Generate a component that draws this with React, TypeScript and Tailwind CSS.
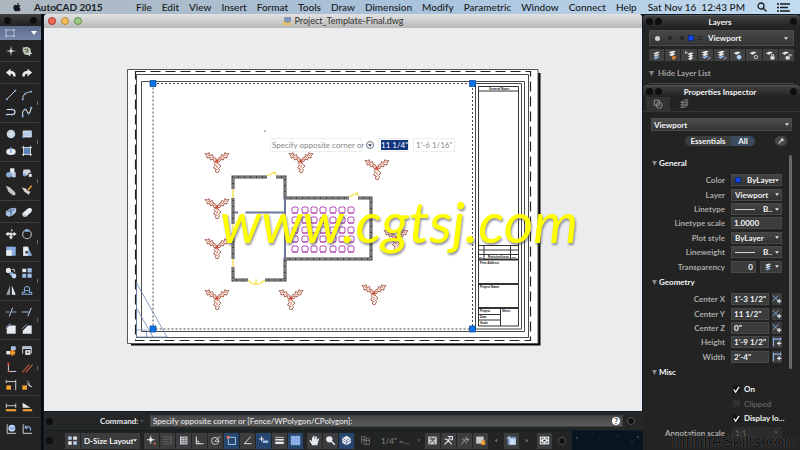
import type { ReactNode } from "react";
import { FaApple } from "react-icons/fa";

const menus = ["File", "Edit", "View", "Insert", "Format", "Tools", "Draw", "Dimension", "Modify", "Parametric", "Window", "Connect", "Help"];

const W = "#e6eaee";
const B = "#86aee0";
const O = "#f0a030";

// all glyphs are drawn on a 14x14 grid
const glyphs: Record<string, ReactNode> = {
  point: <path d="M7 1l.9 5L13 7l-5.100.9L7 13l-.9-5.100L1 7l5.100-1z" fill={W} />,
  recycle: <><path d="M2 3l5-1 4 2 1 5-3 3-5-1-2-4z" fill="#b9c3b0" /><path d="M4 5h4v3H5M8 10l3-2" stroke="#405038" fill="none" /><path d="M10 7v6M7 10h6" stroke={W} /></>,
  undo: <path d="M1 6.500L6.500 2v2.600c4 0 6 1.800 6 6.400H9.600c0-2.500-1-3.200-3.100-3.200V11z" fill={W} />,
  redo: <path d="M13 6.500L7.500 2v2.600c-4 0-6 1.800-6 6.400h2.900c0-2.500 1-3.200 3.100-3.200V11z" fill={W} />,
  line: <><path d="M2 12L12 2" stroke={W} /><path d="M1 11h2v2H1zM11 1h2v2h-2z" fill={B} /></>,
  arc: <><path d="M2 12c0-6 4-8 10-9" stroke={W} fill="none" /><path d="M1 11h2v2H1zM4 4.500h2v2H4zM11 2h2v2h-2z" fill={B} /></>,
  polyline: <><path d="M2 4h6c5 0 5 6 0 6H2" stroke={W} fill="none" strokeWidth="1.200" /><path d="M1 9h2v2H1zM7 3h2v2H7zM7 9h2v2H7z" fill={B} /></>,
  spline: <><path d="M2 12C1 3 6 3 7 6s3 5 5-4" stroke={W} fill="none" strokeWidth="1.200" /><path d="M1 11h2v2H1zM4 3h2v2H4zM8 8h2v2H8zM11 1h2v2h-2z" fill={B} /></>,
  circle: <><circle cx="7" cy="7" r="5" fill="#c9d5e4" /><circle cx="7" cy="7" r="1.500" fill={W} /></>,
  rect: <><path d="M2.500 3.500h9.500v7H2.500z" fill="#b5cbea" stroke={W} /><path d="M1.500 9.500h2v2h-2zM11 3h2v2h-2z" fill={B} /></>,
  ellipse: <><ellipse cx="7" cy="8" rx="5.500" ry="3.800" fill={W} /><path d="M6 3h2v6H6z" fill={B} /></>,
  hatch: <><path d="M3 3h8v8H3z" fill="#5580b5" /><path d="M1 3h12M3 1v12M11 1v12M1 11h12" stroke={W} /></>,
  union: <><path d="M6 1.500h5v6H6z" fill={W} /><circle cx="4.500" cy="9" r="3.200" fill={B} /><path d="M7 6h5.500v6H8z" fill="#c0d2ea" /></>,
  subtract: <><path d="M3 3h7l2 3-3 1-2 3H4L2 7z" fill="#d5d9dd" /><circle cx="4" cy="9" r="2" fill={B} /><path d="M9 8h3.500v3.500H9z" fill={W} /></>,
  brush: <path d="M1 2l5 2 6 6v3H9L4 9z" fill="#c5c5c0" />,
  match: <><path d="M1 4l4 1 3 3 3 1-2 3.500-5-3.500z" fill="#d5d5cc" /><path d="M8 7l4.500-5" stroke={O} strokeWidth="1.800" /></>,
  group: <><path d="M1 6l5-3 7-1v5l-4 4-5 1.500-3-2z" fill="#a9c2e2" /><path d="M2 6h5v6M7 6l5-3M6 3l2 6" stroke="#44658f" fill="none" /></>,
  eraser: <><path d="M1 9l7-6 3-1 2 2-1 3-6 5.500H3z" fill={W} /><path d="M2 9l4 3" stroke="#8d969f" /></>,
  move: <path d="M7 .5l2.500 3H8v2H4V4.500L.5 7 4 9.500V8h2v2H4.500L7 13.500 9.500 10H8V8h2v1.500L13.500 7 10 4.500V6H8z" fill={W} />,
  rotate: <><circle cx="7" cy="7.500" r="5" stroke="#b5bcc5" strokeWidth="1.300" fill="none" /><path d="M5 1.500h4v3H5z" fill={B} /></>,
  scale: <><path d="M1.500 2h11v10.500h-11z" fill={B} /><path d="M1.500 6H8v6.500H1.500z" fill={W} /></>,
  stretch: <><path d="M3 2h5l5 10.500H3z" fill={B} /><path d="M2.500 2h6v10.500h-6z" fill={W} /><path d="M5 7h3l1 3H5z" fill="#445" /></>,
  copy: <><circle cx="4" cy="4" r="3" fill={W} /><circle cx="7.500" cy="8" r="2.200" fill={B} /><circle cx="10.500" cy="10.500" r="2.800" fill="#c5d7ed" /><path d="M8 3h3v3" stroke={W} fill="none" /></>,
  array: <><path d="M1.500 2H6v4H1.500z" fill={W} /><path d="M7.500 1.500h5v5h-5zM1.500 8H6v4.500H1.500zM7.500 8h5v4.500h-5z" fill="#9dbde6" /></>,
  mirror: <><path d="M6 1.500v11H1.500z" fill="#9aa2aa" /><path d="M8 1.500v11h4.500z" fill={W} /></>,
  offset: <path d="M1.500 12h11V9.500h-3C11 6 10 3 7 3S3 6 4.500 9.500h-3zM5 7.500h4" fill="none" stroke={B} strokeWidth="1.200" />,
  trim: <><path d="M1 7h4M8 7h5" stroke={B} strokeWidth="1.300" /><path d="M5 12l4-10" stroke={W} /></>,
  extend: <><path d="M1 7h8" stroke={B} strokeWidth="1.300" /><path d="M8 12l4-10" stroke={W} /></>,
  fillet: <><path d="M2 12.500V8c0-3 2-5 5-5h5.500v9.500z" fill={W} /><path d="M1 7c1-3 2-5 6-5.500" stroke={B} fill="none" /></>,
  chamfer: <><path d="M2 12.500V9l6-6h4.500v9.500z" fill={W} /><path d="M1 7l6-5.500" stroke={B} /></>,
  insert: <><path d="M7 1.500h5.500V6H7z" fill="#a9c5ec" /><path d="M1.500 7H6v4H1.500z" fill={W} /><path d="M6 6h5.500v5.500H6z" fill="#d97a20" /><path d="M8.700 5.500v7M5.500 9H12" stroke={O} strokeWidth="1.500" /></>,
  attach: <><path d="M2 2h10v2H2zM2 4v6M12 4v6" stroke={W} fill={B} /><path d="M5 6h6v5.500H5z" fill={W} /><circle cx="8" cy="8.500" r="1.200" fill="#555" /></>,
  ucs: <><path d="M4 1.500V11h9" stroke={W} fill="none" /><path d="M3 1h2v3H3zM3 10h2v2H3z" fill="#e05030" /></>,
  parallel: <path d="M1.500 12l8-9M5.500 12l8-9" stroke="#c65a3d" strokeWidth="1.300" />,
  lockdim: <><path d="M1.500 1v4M12.500 1v12M2 3h10" stroke={W} /><path d="M1.500 7.500H7v5H1.500z" fill={O} /></>,
  lockangle: <><path d="M7 2l2 2 1 4 3 1M7 5l4 4" stroke={W} fill="none" /><path d="M1.500 7.500H7v5H1.500z" fill={O} /></>,
  dim: <><path d="M1.500 3v5M12.500 3v5M2 5.500h10" stroke={W} /><path d="M1 9.500h12v2.500H1z" fill={O} /></>,
  slope: <><path d="M2 2l9 6H2z" fill={W} /><path d="M2 9.500h11v2.500H2z" fill={O} /></>,
  world: <><path d="M2.500 1.500V12H13" stroke={W} fill="none" /><circle cx="8" cy="6" r="4" fill="#b7d2f4" /><path d="M6 5l2 2 3-2" stroke="#487bb9" fill="none" /></>,
  prev: <><path d="M2.500 1.500V12H13" stroke={W} fill="none" /><path d="M5 6c2-3 7-2 6 3M5 3v3h3" stroke={B} fill="none" strokeWidth="1.200" /></>,
  layers: <><path d="M3 4l6-2 2 1-5 3z" fill={W} /><path d="M3 7l6-2 2 1-5 3z" fill="#c8d5e5" /><path d="M3 10l6-2 2 1-5 3z" fill={B} /></>,
  layersOrange: <><path d="M2 3l6-2 3 1-5 3zM2 6l6-2 3 1-5 3z" fill={W} /><path d="M6 8h6l-2 4H7z" fill="#df8130" /></>,
  layersWalk: <><path d="M2 2l4 3M2 2v3" stroke={W} /><path d="M5 5l4-2 3 1-4 3zM5 8l4-2 3 1-4 3zM5 11l4-2 3 1-4 3z" fill={W} /></>,
  layersMerge: <><path d="M2 3l6-2 3 1-5 3zM2 6l6-2 3 1-5 3z" fill={W} /><path d="M2 9l7-2 2 1-5 3z" fill={B} /><path d="M10 12l3-3" stroke={W} /></>,
  freeze: <><path d="M2 4l5-2 4 1-5 3z" fill={W} /><circle cx="9" cy="9" r="3" fill="#83b7f1" /><path d="M9 6v6M6 9h6" stroke={W} /></>,
  layerOff: <><path d="M2 4l5-2 4 1-5 3z" fill={W} /><circle cx="10" cy="9" r="2.200" fill="none" stroke={W} /></>,
  layerLock: <><path d="M1 4l5-2 4 1-5 3z" fill={W} /><path d="M7 8h5v4H7z" fill={W} /><path d="M8 8V6h3v2" stroke={W} fill="none" /></>,
  layerUnlock: <><path d="M1 4l5-2 4 1-5 3z" fill={W} /><path d="M6 8h5v4H6z" fill={W} /><path d="M10 8V6h3v2" stroke={W} fill="none" /></>,
  infer: <><path d="M6 1v10M1 6h10" stroke={W} strokeWidth="1.200" /><path d="M4 4h4v4H4z" fill={W} /><path d="M9 11h4M11 9v4" stroke="#dd6650" /></>,
  snap: <path d="M2 2.500h10M2 5.500h10M2 8.500h10M2 11.500h10M12 2v10" stroke="#a9aeb3" strokeDasharray="1 1.500" />,
  grid: <><path d="M2.500 2h9.500v10H2.500z" fill="#d5d8dc" /><path d="M3 4.500h9M3 7h9M3 9.500h9M5.500 2v10M8 2v10M10 2v10" stroke="#5c6064" strokeWidth=".7" /></>,
  ortho: <><path d="M3 2v9h9" stroke={W} fill="none" strokeWidth="1.300" /><path d="M3 8h3v3" stroke={W} fill="none" /></>,
  polar: <><circle cx="6.500" cy="7.500" r="4.500" stroke={W} fill="none" /><path d="M6 8l7-6M6 8h6" stroke={W} /></>,
  osnap: <><path d="M3 3h9v9H3z" stroke="#a9c8ee" fill="none" strokeWidth="1.200" /><path d="M1 1h3.500v3.500H1z" fill="#dd7755" /></>,
  otrack: <path d="M11 2l-8 9h9" stroke={W} fill="none" strokeWidth="1.200" />,
  dyn: <><path d="M4.500 2v6M1.500 5h6" stroke={W} strokeWidth="1.300" /><path d="M6 7h7v3H6z" fill="#a9c8ee" /></>,
  lwt: <><path d="M1.500 3h11" stroke={W} /><path d="M1.500 6h11" stroke={W} strokeWidth="2" /><path d="M1.500 10h11" stroke={W} strokeWidth="3" /></>,
  qp: <path d="M1.500 1.500h11v11h-11z" fill="#86aee8" stroke={W} strokeDasharray="1 1" />,
  hand: <path d="M4 13L.5 7l1.200-.8L3.800 8V3h1.400v3l.3-5H7v5L8.500 1.500H10V6.500l1.800-2.500 1.200.5L10.500 13z" fill={W} />,
  zoom: <><circle cx="5.500" cy="5.500" r="4" fill={W} /><path d="M8 8l4.500 4.500" stroke={W} strokeWidth="1.800" /></>,
  cube: <><path d="M7 1l5.500 3v6L7 13l-5.500-3V4z" fill={W} /><path d="M2 4l5 3 5-3M7 7v6M2 7l5 3 5-3" stroke="#5f7da5" fill="none" /></>,
  model: <><path d="M2 2h5M2 6h5M2 2v9M5 4h7v8H5zM5 7h7M8 4v8" stroke="#777" fill="none" /></>,
  anno: <><path d="M1.500 2h11v10h-11z" fill="#c7c9cc" /><path d="M3 11l8-8M5 3l5 8M3 5h7" stroke="#333" /></>,
  person: <path d="M2 12l5-5-3-2H2M7 7l4 5M7 7l2-4M6 2h6v4H9" stroke={W} fill="none" strokeWidth="1.400" />,
  personPlus: <path d="M3 12l4-5-3-2M7 7l3 4M7 7l3-5M9 6h4M11 4v4" stroke="#b5b5b5" fill="none" />,
  lockui: <><path d="M1.500 2H11v9H1.500z" fill="#c9cacc" /><path d="M8 8h5v4.500H8z" fill={O} /><path d="M9 8V6.500h3V8" stroke={O} fill="none" /></>,
  viewports: <><path d="M2 2h10v10H2z" fill="#4778b5" /><path d="M5 5h7.500v7.500H5z" fill="#c7def5" /><path d="M1 4h12M4 1v12" stroke={W} /></>,
  full: <><path d="M1 2h12v10H1z" fill={W} /><path d="M3 6V4h3M8 4h3v2M11 8v2H8M6 10H3V8" stroke="#333" fill="none" /><path d="M5.500 6h3v2h-3z" fill="#333" /></>,
  model4: <><path d="M1.500 2H6v4H1.500zM8 8h4.500v4.500H8z" fill="#b4cced" /><path d="M8 2h4.500v4H8zM1.500 8H6v4.500H1.500z" fill={W} /></>,
  pick: <><path d="M1 2l8 8M9 2l-8 8" stroke="#84aee2" strokeWidth="1.300" /><path d="M7 10h6M10 7v6" stroke={W} strokeWidth="1.600" /></>,
  measure: <><path d="M2 1v12M2 3h10M12 1v4" stroke="#84aee2" strokeWidth="1.600" /><path d="M7 9h6M10 6v6" stroke={W} strokeWidth="1.600" /></>,
};

function Glyph({ name, className = "size-3.5" }: { name: string; className?: string }) {
  return (
    <svg viewBox="0 0 14 14" className={`shrink-0 ${className}`} aria-hidden="true">
      {glyphs[name]}
    </svg>
  );
}

function Arrow({ className = "text-gray-200" }: { className?: string }) {
  return (
    <svg viewBox="0 0 6 4" className={`pointer-events-none h-[3px] w-1 shrink-0 ${className}`} aria-hidden="true">
      <path d="M0 0h6L3 4z" fill="currentColor" />
    </svg>
  );
}

function Disclosure() {
  return (
    <svg viewBox="0 0 5 5" className="size-[5px] shrink-0" aria-hidden="true">
      <path d="M0 0h5L2.500 5z" fill="#888" />
    </svg>
  );
}

function Knob() {
  return <span className="size-[7px] shrink-0 rounded-full bg-[#0e0e0e]" />;
}

const toolGroups = [
  ["point", "recycle"],
  ["undo", "redo"],
  ["line", "arc", "polyline", "spline"],
  ["circle", "rect", "ellipse", "hatch"],
  ["union", "subtract", "brush", "match"],
  ["group", "eraser"],
  ["move", "rotate", "scale", "stretch"],
  ["copy", "array", "mirror", "offset"],
  ["trim", "extend", "fillet", "chamfer"],
  ["insert", "attach", "ucs", "parallel", "lockdim", "lockangle"],
  ["dim", "slope"],
  ["world", "prev"],
];

function ToolPalette() {
  return (
    <aside className="w-[43px] shrink-0 border-r-2 border-[#0b0c0c] bg-[#222322]">
      <div className="flex h-3 items-center justify-between bg-gradient-to-b from-[#414141] to-[#202020] px-1">
        <Knob />
        <Knob />
      </div>
      <button aria-label="Selection tools" className="flex h-3.5 w-full items-center justify-between bg-gradient-to-b from-[#5b6b8c] to-[#7585a8] px-1">
        <svg viewBox="0 0 10 8" className="h-2 w-3">
          <path d="M1 1h8v6H1z" fill="none" stroke="#aeb9cd" />
          <path d="M0 0h2v2H0zM8 0h2v2H8zM0 6h2v2H0zM8 6h2v2H8z" fill="#aeb9cd" />
        </svg>
        <svg viewBox="0 0 6 4" className="h-1 w-1.5">
          <path d="M0 0h6L3 4z" fill="#fff" />
        </svg>
      </button>
      {toolGroups.map((group) => (
        <div key={group[0]} className="mr-0.5 flex items-center border-b border-[#3d3e3d] py-0.5 pl-[3px] last:border-0">
          <div className="grid grid-cols-2">
            {group.map((name) => (
              <button key={name} aria-label={name} className="flex h-[17px] w-4 items-center justify-center">
                <Glyph name={name} className="size-3" />
              </button>
            ))}
          </div>
          {group.length > 2 ? <span className="ml-0.5 h-1 w-px bg-[#686868]" /> : null}
        </div>
      ))}
    </aside>
  );
}

const trees = [[217, 161], [301, 161], [377, 168], [217, 207], [217, 247], [396, 238], [217, 298], [291, 298], [374, 293]];
const chairRows = [210, 220, 230, 239, 249];
const chairCols = [295, 305, 314, 323, 333, 342, 351];
const leaf = "M0 0L-1.500-3-4-4-4.500-6.500-7-5.500-8-8.500-9-7-12-7.500-10-5-10-3-7-3.500-6.500-1-4-2-3 .5z";

function Tree({ x, y }: { x: number; y: number }) {
  return (
    <g transform={`translate(${x} ${y})`} fill="none" stroke="#93432f" strokeWidth=".8" strokeLinejoin="round">
      <path d={leaf} />
      <path d={leaf} transform="scale(-1 1)" />
      <path d="M0 0l-3 2.500 1.500 1.500-2 3 2.500 1-.5 3 2.500.8 1.500-3.300-1-1 2.500-2.500-2-1.500z" />
      <path d="M-9-6L0 0l9-6M0 0v9M-2 1h4" stroke="#e0401f" strokeDasharray="3 1" />
    </g>
  );
}

function Drawing() {
  const walls = "M233 189V177H267M276 177H285V198H349M358 198H371V259H285V280H265M248 280H233V267M233 259V233M233 224V198";
  return (
    <svg viewBox="44 28 598 382" preserveAspectRatio="xMinYMin meet" className="h-full w-full" role="img" aria-label="Floor plan layout">
      <path d="M131 73h409.500v272.500H131z" fill="#050505" />
      <path d="M127.500 69.500h410.500v274H127.500z" fill="#fff" stroke="#555" />
      <g fill="none" stroke="#4a4a4a">
        <path d="M135.500 71.500H530.500V340.500H135.500z" stroke="#222" strokeWidth="1.200" strokeDasharray="10 5" />
        <path d="M136.500 74.500H528.500V337.500H136.500z" />
        <path d="M141.500 81.500H524.500V331.500H141.500z" />
        <path d="M153 83.500H472.500V329H153z" stroke="#444" strokeDasharray="2 2" />
        <path d="M475.500 83.500H521.500V329H475.500z" />
        <path d="M478.500 86.500H518.500V326H478.500zM478.500 91H518.500M478.500 245.500H518.500M478.500 250H518.500M478.500 254.500H518.500M484 245.500V259M510.500 245.500V259M500.500 308.500V326M478.500 314.500H500.500M478.500 320H500.500" stroke="#333" />
        <path d="M478.500 259.500H518.500M478.500 284H518.500M478.500 308H518.500" stroke="#333" strokeWidth="2" />
      </g>
      <g fill="#111" fontFamily="Liberation Sans, sans-serif" fontSize="3" fontWeight="bold">
        <text x="489" y="90">General Notes</text>
        <text x="479" y="258" fontSize="2">No.</text>
        <text x="488" y="258">Revision/Issue</text>
        <text x="511.500" y="258" fontSize="2">Date</text>
        <text x="480" y="264">Firm Address</text>
        <text x="480" y="288">Project Name</text>
        <text x="480" y="312">Project</text>
        <text x="480" y="318">Date</text>
        <text x="480" y="323.500">Scale</text>
        <text x="502" y="312">Sheet</text>
      </g>
      <g fill="none">
        <path d={walls} stroke="#444" strokeWidth="3" />
        <path d={walls} stroke="#a8a8a8" strokeDasharray="5 1" />
        <path d="M285 198V259M245.500 212.500H285M234 212.500H238" stroke="#6c76a0" strokeWidth="2" />
        <path d="M267 176l8-4 1 3M349 197l8-4 1 3M233 189v9M233 224v9M233 259v8M248 280l3 3 5 1.500 5-1.500 4-3M256 279v5" stroke="#f1df45" strokeWidth="1.300" />
        <g stroke="#b548b4">
          {chairRows.map((y) =>
            chairCols.map((x) => <path key={`${x}-${y}`} d={`M${x - 2} ${y - 3}h4l1 1v4l-1 1h-4l-1-1v-4zM${x - 3} ${y + 3}h6`} />),
          )}
        </g>
        <path d="M136.500 283V337H167zM136.500 308L153 337M136.500 330h10v7" stroke="#6c87b1" strokeWidth=".8" />
      </g>
      {trees.map(([x, y]) => (
        <Tree key={`${x}-${y}`} x={x} y={y} />
      ))}
      <path d="M264 131h2" stroke="#777" />
      <g fill="#0a74e8" stroke="#124a96" strokeWidth=".8">
        <path d="M150 80.500h6v6h-6zM469.500 80.500h6v6h-6zM150 326h6v6h-6zM469.500 326h6v6h-6z" />
      </g>
    </svg>
  );
}

function DocumentWindow() {
  return (
    <main className="flex min-h-0 flex-1 flex-col overflow-hidden rounded-t-[4px] bg-[#ebecee]">
      <div className="flex h-3.5 shrink-0 items-center bg-gradient-to-b from-[#e2e2e2] to-[#b8b8b8] px-1">
        <div className="flex w-[52px] gap-[5px]">
          <button aria-label="Close" className="size-2 rounded-full border border-[#a33b2c] bg-[#ee6b58]" />
          <button aria-label="Minimize" className="size-2 rounded-full border border-[#b98432] bg-[#f5bf5e]" />
          <button aria-label="Zoom" className="size-2 rounded-full border border-[#5d8a48] bg-[#a1cb83]" />
        </div>
        <h1 className="mr-[52px] flex flex-1 items-center justify-center gap-0.5 text-[9px] leading-3 text-[#333]">
          <svg viewBox="0 0 10 10" className="size-2.5">
            <path d="M2 1h7v6H2z" fill="#8396b8" />
            <path d="M1 5l4 2 4-1v3H1z" fill="#eac057" />
          </svg>
          Project_Template-Final.dwg
        </h1>
      </div>
      <div className="relative min-h-0 flex-1">
        <Drawing />
        <div className="absolute top-[110px] left-[226px] flex items-center gap-1 text-[8px] leading-3">
          <span className="w-[92px] border border-[#eeeeee] bg-white px-px whitespace-nowrap text-[#858585]">Specify opposite corner or</span>
          <button aria-label="Options" className="flex size-2 items-center justify-center rounded-sm border border-gray-500 bg-white">
            <Arrow className="text-gray-700" />
          </button>
          <div className="w-[31px] border border-[#eeeeee] bg-white px-0.5 py-px">
            <input aria-label="Width" defaultValue={'11 1/4"'} className="block h-2.5 w-[27px] bg-[#14367f] text-[8px] text-white outline-none" />
          </div>
          <input aria-label="Height" defaultValue={"1'-6 1/16\""} className="h-3.5 w-[42px] border border-[#eeeeee] bg-white px-0.5 text-[#8c8c8c] outline-none" />
        </div>
        <p className="pointer-events-none absolute top-[163px] left-[176px] text-[57px] leading-[60px] whitespace-nowrap text-[#ffff00] italic drop-shadow-[1px_2px_1px_rgba(70,70,90,0.6)]">
          www.cgtsj.com
        </p>
      </div>
    </main>
  );
}

function CommandLine() {
  return (
    <div className="flex h-5 shrink-0 items-center border-y border-[#101c27] bg-[#252626] pr-2 pl-0.5 text-[8px] text-gray-200">
      <Knob />
      <label htmlFor="command" className="ml-[47px] w-10 font-bold">
        Command:
      </label>
      <Arrow className="text-gray-600" />
      <div className="ml-1.5 flex h-3 flex-1 items-center border border-[#404040] bg-gradient-to-b from-[#464646] to-[#5a5a5a] px-0.5">
        <input id="command" defaultValue="Specify opposite corner or [Fence/WPolygon/CPolygon]:" className="min-w-0 flex-1 bg-transparent font-medium outline-none" />
        <button aria-label="Help" className="flex size-2 items-center justify-center rounded-full bg-white text-[8px] leading-none font-bold text-[#333]">
          ?
        </button>
      </div>
      <span className="ml-1 size-2 rounded-full border border-[#555] bg-[#111]" />
    </div>
  );
}

function StatusButton({ name, on }: { name: string; on?: boolean }) {
  return (
    <button aria-label={name} aria-pressed={on} className={`flex h-4 w-[15px] items-center justify-center ${on ? "bg-[#26456f]" : "bg-[#3c3d3e]"}`}>
      <Glyph name={name} className="size-[11px]" />
    </button>
  );
}

function StatusBar() {
  return (
    <div className="flex h-[19px] shrink-0 bg-[#071521]">
      <div className="flex w-[528px] items-center bg-[#232424] pl-0.5 text-[8px] text-gray-100">
        <Knob />
        <div className="ml-3 flex gap-px">
          <StatusButton name="model4" />
          <div className="flex w-[59px] items-center bg-[#3b3c3d] pr-[3px] pl-[3px]">
            <select aria-label="Layout" className="min-w-0 flex-1 appearance-none bg-transparent font-bold outline-none">
              <option>D-Size Layout</option>
            </select>
            <Arrow />
          </div>
        </div>
        <div className="ml-1 flex gap-px">
          {["infer", "snap", "grid", "ortho", "polar", "osnap", "otrack", "dyn", "lwt", "qp"].map((n) => (
            <StatusButton key={n} name={n} on={["osnap", "dyn", "qp"].includes(n)} />
          ))}
        </div>
        <div className="ml-1 flex gap-px">
          <StatusButton name="hand" />
          <StatusButton name="zoom" />
          <StatusButton name="cube" on />
        </div>
        <button aria-label="Model" className="ml-1 flex h-4 w-[15px] items-center justify-center">
          <Glyph name="model" className="size-[11px]" />
        </button>
        <select aria-label="Viewport scale" className="ml-2 w-9 appearance-none bg-transparent text-[#888] outline-none">
          <option>{'1/4" =...'}</option>
        </select>
        <Arrow className="text-gray-600" />
        <div className="ml-1 flex items-center gap-px">
          <StatusButton name="anno" />
          <StatusButton name="person" />
          <StatusButton name="personPlus" />
          <StatusButton name="lockui" />
        </div>
        <div className="ml-1.5 flex items-center gap-1.5">
          <span className="rotate-90"><Arrow className="text-gray-500" /></span>
          <StatusButton name="viewports" />
          <span className="-rotate-90"><Arrow className="text-gray-500" /></span>
        </div>
        <div className="ml-2 flex items-center gap-1.5">
          <StatusButton name="full" />
          <span className="size-2 rounded-full border border-[#555] bg-[#111]" />
        </div>
      </div>
      <svg className="h-full min-w-0 flex-1" aria-hidden="true">
        <g fill="#30526c">
          <circle cx="5" cy="7" r="1" /><circle cx="20" cy="3" r=".6" /><circle cx="28" cy="9" r=".8" /><circle cx="45" cy="5" r=".6" /><circle cx="60" cy="11" r=".8" /><circle cx="66" cy="6" r="1" />
        </g>
      </svg>
    </div>
  );
}

function PanelHeader({ title }: { title: string }) {
  return (
    <div className="flex h-3 shrink-0 items-center gap-0.5 rounded-t-[4px] border-t border-[#555] bg-gradient-to-b from-[#414141] to-[#222] px-[3px]">
      <Knob />
      <Knob />
      <h2 className="flex-1 pr-3 text-center text-[8px] leading-3 font-bold text-gray-100">{title}</h2>
      <Knob />
    </div>
  );
}

function LayersPanel() {
  return (
    <section className="h-[70px] shrink-0 overflow-hidden bg-[#232424]">
      <PanelHeader title="Layers" />
      <div className="px-1.5 pt-[3px]">
        <div className="flex h-4 items-center gap-1 border border-[#4a4a4a] bg-gradient-to-b from-[#484848] to-[#353535] px-[5px]">
          <span className="size-[5px] rounded-full bg-[#cfcfcf]" />
          <span className="ml-1 size-1 bg-[#292929]" />
          <span className="ml-1 size-1 bg-[#292929]" />
          <span className="size-1.5 border border-[#102a72] bg-[#1447f4]" />
          <span className="size-1 border border-[#292929]" />
          <select aria-label="Current layer" className="ml-0.5 min-w-0 flex-1 appearance-none bg-transparent text-[8px] font-bold text-gray-100 outline-none">
            <option>Viewport</option>
          </select>
          <Arrow />
        </div>
        <div className="mt-[3px] flex h-3 gap-px bg-[#242424]">
          {["layers", "layersOrange", "layersWalk", "layersMerge", "layersMerge", "freeze", "layerOff", "layerLock", "layerUnlock"].map((n, i) => (
            <button key={i} aria-label={n} className="flex flex-1 items-center justify-center bg-[#414141]">
              <Glyph name={n} className="size-[11px]" />
            </button>
          ))}
        </div>
        <button className="mt-1.5 flex items-center gap-1 text-[8px] leading-3 font-bold text-[#a0a0a0]">
          <Disclosure />
          Hide Layer List
        </button>
        <div className="mt-1 border-t border-[#484848]" />
      </div>
    </section>
  );
}

function PropertySelect({ id, value, mark }: { id: string; value: string; mark?: "color" | "line" }) {
  return (
    <div className="flex h-3 w-[51px] items-center border border-[#484848] bg-gradient-to-b from-[#454545] to-[#323232] pr-0.5 pl-[3px]">
      {mark === "color" ? <span className="mr-1.5 size-1.5 border border-[#102a72] bg-[#1447f4]" /> : null}
      {mark === "line" ? <span className="mr-2 h-px w-5 bg-gray-300" /> : null}
      <select id={id} className="min-w-0 flex-1 appearance-none bg-transparent text-[8px] leading-[10px] font-bold text-gray-100 outline-none">
        <option>{value}</option>
      </select>
      <Arrow />
    </div>
  );
}

function Row({ id, label, children }: { id: string; label: string; children: ReactNode }) {
  return (
    <div className="flex items-center gap-1.5">
      <label htmlFor={id} className="w-[82px] text-right font-bold whitespace-nowrap text-[#a9a9a9]">
        {label}
      </label>
      {children}
    </div>
  );
}

function SectionTitle({ children }: { children: ReactNode }) {
  return (
    <h3 className="flex h-4 items-center gap-0.5 pl-[9px] text-[8px] font-bold text-gray-100">
      <Disclosure />
      {children}
    </h3>
  );
}

const general: { label: string; value: string; mark?: "color" | "line"; text?: boolean }[] = [
  { label: "Color", value: "ByLayer", mark: "color" },
  { label: "Layer", value: "Viewport" },
  { label: "Linetype", value: "B..", mark: "line" },
  { label: "Linetype scale", value: "1.0000", text: true },
  { label: "Plot style", value: "ByLayer" },
  { label: "Lineweight", value: "B..", mark: "line" },
];

const geometry = [
  ["Center X", "1'-3 1/2\"", "pick"],
  ["Center Y", '11 1/2"', "pick"],
  ["Center Z", '0"', "pick"],
  ["Height", "1'-9 1/2\"", "measure"],
  ["Width", "2'-4\"", "measure"],
];

const inputClass = "h-3 border border-[#484848] bg-[#3c3c3c] px-0.5 text-[8px] font-bold text-gray-100 outline-none";

function PropertiesPanel() {
  return (
    <section className="relative flex min-h-0 flex-1 flex-col overflow-hidden bg-[#222322] text-[8px]">
      <PanelHeader title="Properties Inspector" />
      <div className="flex h-[15px] shrink-0 border-b border-[#353535] pl-[3px]">
        <button aria-label="Object properties" className="flex w-6 items-center justify-center bg-[#333]">
          <svg viewBox="0 0 12 12" className="size-2.5" fill="none" stroke="#a5a5a5">
            <path d="M1.500 1.500h6v6h-6z" />
            <circle cx="7.500" cy="7.500" r="3.500" />
          </svg>
        </button>
        <button aria-label="Layer properties" className="ml-1 flex w-5 items-center justify-center">
          <svg viewBox="0 0 12 12" className="size-2.5" fill="none" stroke="#909090">
            <path d="M2 4l5-3h4L7 4zM2 7l5-3h4L7 7zM2 10l5-3h4l-4 3z" />
          </svg>
        </button>
      </div>
      <div className="mx-2 mt-1.5 flex h-[13px] shrink-0 items-center border border-[#4a4a4a] bg-gradient-to-b from-[#4c4c4c] to-[#363636] px-0.5">
        <select aria-label="Object type" className="min-w-0 flex-1 appearance-none bg-transparent font-bold text-gray-100 outline-none">
          <option>Viewport</option>
        </select>
        <Arrow />
      </div>
      <div className="mt-[5px] flex shrink-0 items-center pl-[42px]">
        <div className="flex h-2.5 overflow-hidden rounded-full font-bold text-gray-100">
          <button className="flex w-[46px] items-center justify-center bg-[#3c3d3e]">Essentials</button>
          <button className="flex w-6 items-center justify-center bg-[#3b4b60]">All</button>
        </div>
        <button aria-label="Quick select" className="ml-5 flex h-2.5 w-3 items-center justify-center rounded-full bg-[#454545]">
          <svg viewBox="0 0 10 10" className="size-2">
            <path d="M2 8l4-4M5 2l3 3M6 4l2-2" stroke="#ddd" strokeWidth="1.500" />
          </svg>
        </button>
      </div>
      <div className="mt-[9px] flex min-h-0 flex-1">
        <div className="min-w-0 flex-1">
          <SectionTitle>General</SectionTitle>
          <div className="mt-0.5 grid h-[101px] auto-rows-fr">
            {general.map((p) => (
              <Row key={p.label} id={p.label} label={p.label}>
                {p.text ? <input id={p.label} defaultValue={p.value} className={`w-[51px] ${inputClass}`} /> : <PropertySelect id={p.label} value={p.value} mark={p.mark} />}
              </Row>
            ))}
            <Row id="transparency" label="Transparency">
              <div className="flex gap-1">
                <input id="transparency" defaultValue="0" className={`w-[25px] text-right ${inputClass}`} />
                <button aria-label="Transparency source" className="flex h-3 w-[22px] items-center justify-between border border-[#484848] bg-[#3c3c3c] px-0.5">
                  <Glyph name="layers" className="size-2.5" />
                  <Arrow />
                </button>
              </div>
            </Row>
          </div>
          <SectionTitle>Geometry</SectionTitle>
          <div className="mt-0.5 grid h-[72px] auto-rows-fr">
            {geometry.map(([label, value, icon]) => (
              <Row key={label} id={label} label={label}>
                <div className="flex gap-[3px]">
                  <input id={label} defaultValue={value} className={`w-[38px] ${inputClass}`} />
                  <button aria-label={`Pick ${label}`} className="flex h-3 w-2.5 items-center justify-center bg-[#3c3c3c]">
                    <Glyph name={icon} className="size-2.5" />
                  </button>
                </div>
              </Row>
            ))}
          </div>
          <SectionTitle>Misc</SectionTitle>
          <div className="mt-0.5 grid h-[58px] auto-rows-fr">
            {["On", "Clipped", "Display lo..."].map((label) => (
              <label key={label} className={`flex items-center gap-1 pl-[90px] font-bold whitespace-nowrap ${label === "Clipped" ? "text-[#606060]" : "text-gray-100"}`}>
                <input type="checkbox" defaultChecked={label !== "Clipped"} disabled={label === "Clipped"} className="peer sr-only" />
                <svg viewBox="0 0 8 8" className="size-[7px] bg-[#111] text-transparent peer-checked:text-white peer-disabled:bg-[#303030]">
                  <path d="M1 4l2 3 4-6" fill="none" stroke="currentColor" strokeWidth="1.500" />
                </svg>
                {label}
              </label>
            ))}
            <Row id="annotation" label="Annotation scale">
              <div className="flex w-[51px] items-center bg-[#2b2d2a] px-1">
                <select id="annotation" className="min-w-0 flex-1 appearance-none bg-transparent text-[#6a6a6a] outline-none">
                  <option>1:1</option>
                </select>
                <Arrow className="text-gray-600" />
              </div>
            </Row>
          </div>
        </div>
        <div className="mr-2 h-[214px] w-[3px] rounded-full bg-[#686868]" />
      </div>
      <p className="pointer-events-none absolute right-0.5 -bottom-0.5 font-['Liberation_Sans'] text-[17px] leading-5 text-[#0c0d0c] [text-shadow:0_0_1px_#888]">InfiniteSkills.com</p>
    </section>
  );
}

export default function App() {
  return (
    <div className="flex h-screen w-full flex-col overflow-hidden bg-[#0a1a28] font-['Lato','Open_Sans',sans-serif]">
      <header className="flex h-3.5 shrink-0 items-center bg-gradient-to-r from-[#aeb7bf] via-[#a8c2dc] to-[#c3dbf0] text-[10px] leading-3 font-medium whitespace-nowrap text-[#181c22]">
        <FaApple className="ml-3 size-2.5 shrink-0" />
        <strong className="ml-3 w-[90px]">AutoCAD 2015</strong>
        <nav className="ml-3 flex gap-2.5">
          {menus.map((m) => (
            <button key={m}>{m}</button>
          ))}
        </nav>
        <time className="ml-auto">Sat Nov 16&nbsp; 12:43 PM</time>
        <button aria-label="Search" className="ml-3">
          <svg viewBox="0 0 10 10" className="size-2.5" fill="none" stroke="#181c22" strokeWidth="1.300">
            <circle cx="4" cy="4" r="3" />
            <path d="M6 6l3.500 3.500" />
          </svg>
        </button>
        <button aria-label="Notifications" className="mx-2.5">
          <svg viewBox="0 0 13 9" className="h-[9px] w-[13px]" stroke="#181c22" strokeWidth="1.500">
            <path d="M0 1h2M3 1h10M0 4.500h2M3 4.500h8M0 8h2M3 8h10" />
          </svg>
        </button>
      </header>
      <div className="flex min-h-0 flex-1">
        <ToolPalette />
        <div className="ml-px flex min-w-0 flex-1 flex-col">
          <div className="mr-px flex min-h-0 flex-1 flex-col">
            <DocumentWindow />
          </div>
          <CommandLine />
          <StatusBar />
        </div>
        <div className="flex w-[157px] shrink-0 flex-col pt-px">
          <LayersPanel />
          <PropertiesPanel />
        </div>
      </div>
    </div>
  );
}
